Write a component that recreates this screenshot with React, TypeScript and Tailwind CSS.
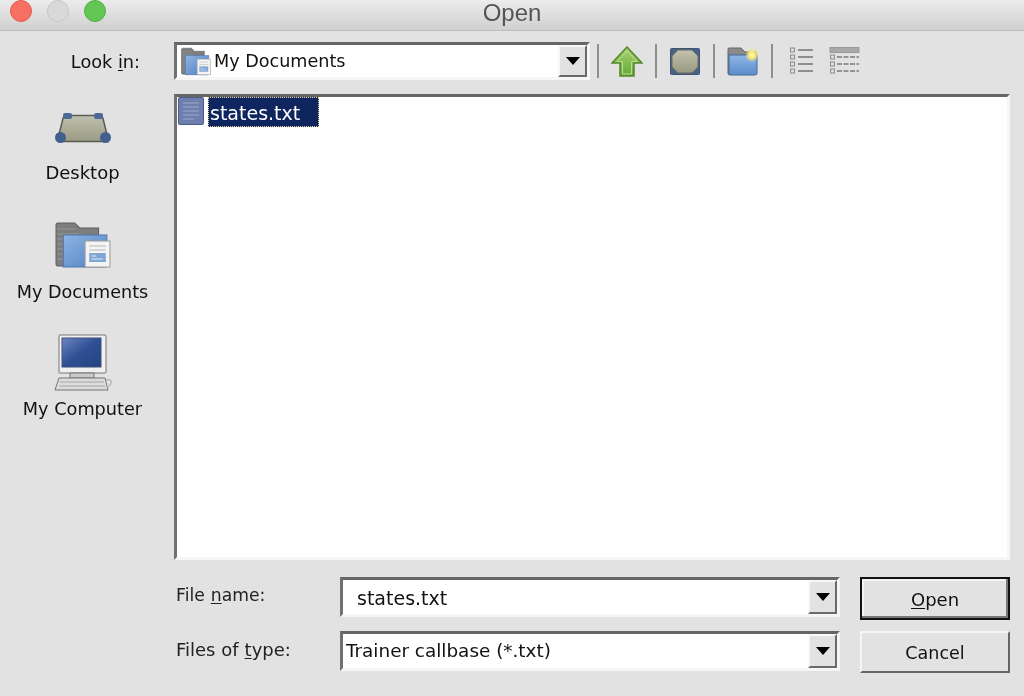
import type { ReactNode } from "react";

const uiFont = "font-['DejaVu_Sans',sans-serif]";

function ArrowDown() {
  return (
    <svg width="14" height="8" viewBox="0 0 14 8">
      <path d="M0 0h14L7 8z" fill="#000" />
    </svg>
  );
}

function Combo({ children, width, height }: { children: ReactNode; width: string; height: string }) {
  return (
    <div className={`flex ${width} ${height} border-[3px] border-t-[#666] border-l-[#707070] border-r-[#f6f6f6] border-b-[#f6f6f6] bg-white`}>
      <div className="flex min-w-0 flex-1 items-center">{children}</div>
      <div className="flex w-[29px] items-center justify-center border-2 border-t-[#f8f8f8] border-l-[#f8f8f8] border-r-[#6a6a6a] border-b-[#6a6a6a] bg-[#e2e2e2]">
        <ArrowDown />
      </div>
    </div>
  );
}

function Separator() {
  return <div className="h-[34px] w-[2px] border-l-2 border-[#8f8f8f]" />;
}

function DocsIcon({ small }: { small?: boolean }) {
  return (
    <svg width={small ? 30 : 56} height={small ? 29 : 48} viewBox="0 0 54 48" preserveAspectRatio="none">
      <path d="M1 4q0-2 2-2h16l5 5h18v38H3q-2 0-2-2z" fill="#7d7d7d" stroke="#5e5e5e" />
      <path d="M2 8h18M2 13h20M2 18h8M2 23h7M2 28h7M2 33h7M2 38h7" stroke="#9a9a9a" />
      <path d="M8 14h42v30q0 2-2 2H8z" fill="url(#docsBlue)" stroke="#4d76ad" />
      <rect x="29" y="20" width="24" height="26" fill="#f4f4f4" stroke="#9c9c9c" />
      <path d="M33 25h16M33 29h16" stroke="#b5b5b5" />
      <rect x="33" y="32" width="16" height="9" fill="#7fa6d4" />
      <path d="M35 35h5M35 38h11" stroke="#dfe9f4" />
      <defs>
        <linearGradient id="docsBlue" x1="0" y1="0" x2="1" y2="1">
          <stop offset="0" stopColor="#8db4e4" />
          <stop offset="1" stopColor="#4f80c0" />
        </linearGradient>
      </defs>
    </svg>
  );
}

function DesktopIcon() {
  return (
    <svg width="56" height="30" viewBox="0 0 56 30">
      <defs>
        <linearGradient id="desk" x1="0" y1="0" x2="0" y2="1">
          <stop offset="0" stopColor="#c0c0ae" />
          <stop offset="1" stopColor="#9a9b84" />
        </linearGradient>
      </defs>
      <path d="M11 2.500h34q2 0 3 3l5 20q0 3-3 3H6q-3 0-3-3l5-20q1-3 3-3z" fill="url(#desk)" stroke="#5a5b50" strokeWidth="1.5" />
      <rect x="8" y="0" width="9" height="6" rx="2" fill="#4c6a98" />
      <rect x="39" y="0" width="9" height="6" rx="2" fill="#4c6a98" />
      <ellipse cx="5.500" cy="24.500" rx="5.500" ry="5.500" fill="#41608f" />
      <ellipse cx="50.500" cy="24.500" rx="5.500" ry="5.500" fill="#41608f" />
    </svg>
  );
}

function HomeIcon() {
  return (
    <svg width="30" height="27" viewBox="0 0 30 27">
      <defs>
        <linearGradient id="home" x1="0" y1="0" x2="0" y2="1">
          <stop offset="0" stopColor="#c2c2ae" />
          <stop offset="1" stopColor="#97987f" />
        </linearGradient>
      </defs>
      <rect x="0.5" y="0.5" width="29" height="26" rx="1" fill="#4b6288" stroke="#3f5275" />
      <path d="M8 2h14l6 6v11l-6 6H8l-6-6V8z" fill="url(#home)" stroke="#6a6b5c" />
    </svg>
  );
}

function ComputerIcon() {
  return (
    <svg width="58" height="58" viewBox="0 0 58 58">
      <defs>
        <linearGradient id="screen" x1="0" y1="0" x2="1" y2="1">
          <stop offset="0" stopColor="#6c86c0" />
          <stop offset="0.5" stopColor="#2e4f94" />
          <stop offset="1" stopColor="#24437f" />
        </linearGradient>
      </defs>
      <rect x="5" y="1" width="47" height="38" rx="1" fill="#f0f0f0" stroke="#777" />
      <rect x="8" y="4" width="39" height="29" fill="url(#screen)" stroke="#3d4f78" />
      <path d="M16 39h24v5H16z" fill="#c9c9c9" stroke="#777" />
      <path d="M5 44h46l3 12H1z" fill="#dcdcdc" stroke="#757575" />
      <path d="M6 48h44M5 52h46" stroke="#a5a5a5" />
      <path d="M52 46q6-1 5 3t-4 3" fill="none" stroke="#bbb" strokeWidth="1.5" />
    </svg>
  );
}

function UpIcon() {
  return (
    <svg width="32" height="31" viewBox="0 0 32 31">
      <defs>
        <linearGradient id="up" x1="0" y1="0" x2="0" y2="1">
          <stop offset="0" stopColor="#a9d276" />
          <stop offset="1" stopColor="#64a934" />
        </linearGradient>
      </defs>
      <path d="M16 1l15 16h-8v13H9V17H1z" fill="url(#up)" stroke="#56872a" strokeWidth="1.5" />
      <path d="M16 5L26 15.500H20.500V28H11.500V15.500H6z" fill="none" stroke="#b9dd8e" />
    </svg>
  );
}

function NewFolderIcon() {
  return (
    <svg width="32" height="30" viewBox="0 0 32 30">
      <defs>
        <radialGradient id="glow">
          <stop offset="0" stopColor="#fffbc0" />
          <stop offset="0.5" stopColor="#f8e56f" />
          <stop offset="1" stopColor="#f6e27a" stopOpacity="0" />
        </radialGradient>
        <linearGradient id="folderBlue" x1="0" y1="0" x2="0" y2="1">
          <stop offset="0" stopColor="#8fb6e6" />
          <stop offset="1" stopColor="#5c8ccb" />
        </linearGradient>
      </defs>
      <path d="M1 3q0-1 1-1h12l4 4h11v22H1z" fill="#8a8a8a" stroke="#666" />
      <path d="M2 9h28v18q0 2-2 2H2z" fill="url(#folderBlue)" stroke="#41689c" />
      <circle cx="25" cy="9" r="7" fill="url(#glow)" />
    </svg>
  );
}

function ListIcon() {
  return (
    <svg width="24" height="28" viewBox="0 0 24 28">
      {[3, 10, 17, 24].map((y) => (
        <g key={y}>
          <rect x="1.5" y={y - 2} width="4" height="4" fill="#ddd" stroke="#8c8c8c" />
          <path d={`M9 ${y}h15`} stroke="#7a7a7a" strokeWidth="1.6" />
        </g>
      ))}
    </svg>
  );
}

function DetailsIcon() {
  return (
    <svg width="31" height="28" viewBox="0 0 31 28">
      <rect x="1" y="0.500" width="29" height="5" fill="#a9a9a9" stroke="#999" />
      {[10, 17, 24].map((y) => (
        <g key={y}>
          <rect x="1.5" y={y - 2} width="4" height="4" fill="#ddd" stroke="#8c8c8c" />
          <path d={`M8 ${y}h22`} stroke="#7a7a7a" strokeWidth="1.6" strokeDasharray="5 1.5" />
        </g>
      ))}
    </svg>
  );
}

function TextFileIcon() {
  return (
    <svg width="26" height="28" viewBox="0 0 26 28">
      <rect x="0.5" y="0.5" width="25" height="27" rx="1" fill="#6e7fae" stroke="#4c5b88" />
      <path d="M5 6h16M5 10h16M5 14h16M5 18h16M5 22h11" stroke="#8e9cc2" strokeWidth="1.5" />
    </svg>
  );
}

function Place({ icon, label, labelClass, mt }: { icon: ReactNode; label: string; labelClass: string; mt: string }) {
  return (
    <div className={`flex flex-col items-center ${mt}`}>
      {icon}
      <span className={`${labelClass} leading-[24px] text-[#111]`}>{label}</span>
    </div>
  );
}

export default function App() {
  return (
    <div className={`flex h-[696px] w-[1024px] flex-col overflow-hidden bg-[#e2e2e2] blur-[0.35px] ${uiFont}`}>
      <div className="grid h-[31px] grid-cols-3 items-start border-b border-[#bdbdbd] bg-gradient-to-b from-[#ececec] to-[#d0d0d0]">
        <div className="flex h-full items-start gap-[15px] pl-[10px]">
          <span className="h-[22px] w-[22px] rounded-full border border-[#e5584e] bg-[#f56f63]" />
          <span className="h-[22px] w-[22px] rounded-full border border-[#c6c6c6] bg-[#d9d9d9]" />
          <span className="h-[22px] w-[22px] rounded-full border border-[#4fb044] bg-[#62c655]" />
        </div>
        <div className="text-center font-['Liberation_Sans',sans-serif] text-[24px] leading-[26px] text-[#555]">Open</div>
      </div>

      <div className="mt-[11px] flex h-[38px] items-center">
        <div className="w-[174px] pt-[3px] pr-[34px] text-right text-[17.7px] text-[#111]">
          Look <span className="underline underline-offset-2">i</span>n:
        </div>
        <Combo width="w-[416px]" height="h-[38px]">
          <div className="flex items-center gap-[3px] pl-[4px] text-[17.6px] text-[#111]">
            <DocsIcon small />
            <span className="pt-[1px]">My Documents</span>
          </div>
        </Combo>
        <div className="ml-[7px] flex items-center">
          <Separator />
          <div className="flex w-[56px] justify-center"><UpIcon /></div>
          <Separator />
          <div className="flex w-[56px] justify-center"><HomeIcon /></div>
          <Separator />
          <div className="flex w-[56px] justify-center"><NewFolderIcon /></div>
          <Separator />
          <div className="flex w-[56px] justify-center"><ListIcon /></div>
          <DetailsIcon />
        </div>
      </div>

      <div className="mt-[14px] flex h-[466px]">
        <div className="flex w-[174px] flex-col pt-[19px] pr-[9px]">
          <Place icon={<DesktopIcon />} label="Desktop" labelClass="mt-[18px] text-[18px]" mt="" />
          <Place icon={<DocsIcon />} label="My Documents" labelClass="mt-[11px] text-[17.6px]" mt="mt-[36px]" />
          <Place icon={<ComputerIcon />} label="My Computer" labelClass="mt-[5px] text-[17.7px]" mt="mt-[30px]" />
        </div>
        <div className="flex h-full w-[836px] items-start border-[3px] border-t-[#666] border-l-[#707070] border-r-[#f6f6f6] border-b-[#f6f6f6] bg-white">
          <div className="ml-[1px] flex items-start">
            <TextFileIcon />
            <span className="ml-[4px] flex h-[30px] w-[111px] items-center border border-dotted border-[#e6d58f] bg-[#0f2560] pt-[2px] pl-[1px] text-[19px] text-white">
              states.txt
            </span>
          </div>
        </div>
      </div>

      <div className="mt-[17px] flex pl-[176px]">
        <div className="flex w-[164px] flex-col gap-[14px]">
          <div className="flex h-[38px] items-center text-[17.2px] text-[#222]">
            File <span className="ml-[6px] underline underline-offset-2">n</span>ame:
          </div>
          <div className="flex h-[38px] items-center pt-[2px] text-[18px] text-[#222]">
            Files of <span className="ml-[6px] underline underline-offset-2">t</span>ype:
          </div>
        </div>
        <div className="flex flex-col gap-[14px]">
          <Combo width="w-[500px]" height="h-[40px]">
            <span className="pt-[3px] pl-[14px] text-[19px] text-[#111]">states.txt</span>
          </Combo>
          <Combo width="w-[500px]" height="h-[40px]">
            <span className="pl-[3px] text-[18.4px] text-[#111]">Trainer callbase (*.txt)</span>
          </Combo>
        </div>
        <div className="ml-[20px] flex flex-col gap-[11px]">
          <button className="h-[43px] w-[150px] border-2 border-[#111] bg-[#e2e2e2] pt-[1px] text-[18px] text-[#111] shadow-[inset_-2px_-2px_0_#777,inset_2px_2px_0_#f4f4f4]">
            <span className="underline underline-offset-2">O</span>pen
          </button>
          <button className="h-[42px] w-[150px] border-2 border-t-[#f6f6f6] border-l-[#f6f6f6] border-r-[#666] border-b-[#666] bg-[#e2e2e2] pt-[3px] text-[17.5px] text-[#111]">
            Cancel
          </button>
        </div>
      </div>
    </div>
  );
}
